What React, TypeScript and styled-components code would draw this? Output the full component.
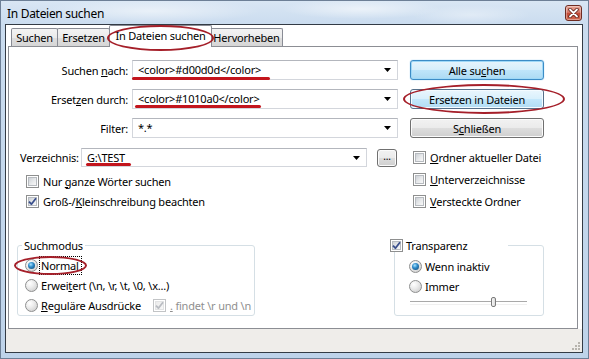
import React from "react";
import styled, { createGlobalStyle, css } from "styled-components";

const GlobalStyle = createGlobalStyle`
  html, body { margin: 0; padding: 0; }
  body {
    font-family: "Noto Sans", "Open Sans", sans-serif;
    font-size: 11px;
    letter-spacing: -0.2px;
    color: #000;
    background: #c4d7ed;
  }
  * { box-sizing: border-box; }
`;

const Window = styled.div`
  width: 589px;
  height: 359px;
  border: 1px solid #6d7f96;
  padding: 0 5px 5px 4px;
  display: flex;
  flex-direction: column;
  background:
    radial-gradient(ellipse 110px 12px at 150px 10px, rgba(255, 255, 255, 0.5), transparent),
    radial-gradient(ellipse 80px 10px at 360px 8px, rgba(255, 255, 255, 0.55), transparent),
    radial-gradient(ellipse 60px 10px at 470px 14px, rgba(255, 255, 255, 0.35), transparent),
    linear-gradient(180deg, #d9e6f4 0px, #cadcef 24px, #bed3ea 100%);
`;

const TitleBar = styled.div`
  height: 23px;
  flex: none;
  display: flex;
  align-items: flex-start;
  justify-content: space-between;
  padding-left: 2px;
`;

const Title = styled.span`
  font-size: 12px;
  letter-spacing: -0.3px;
  line-height: 23px;
  margin-top: 1px;
`;

const CloseBtn = styled.div`
  width: 17px;
  height: 16px;
  margin-top: 4px;
  margin-right: 1px;
  border: 1px solid #6e2c22;
  border-radius: 3px;
  background: linear-gradient(180deg, #e9a898 0%, #d6796a 45%, #c34a36 52%, #d06a52 100%);
  box-shadow: inset 0 0 0 1px rgba(255, 255, 255, 0.35);
  display: flex;
  align-items: center;
  justify-content: center;
`;

const Client = styled.div`
  flex: 1;
  border: 1px solid #333b45;
  background: #fff;
  display: flex;
  flex-direction: column;
`;

const TabStrip = styled.div`
  height: 21px;
  flex: none;
  display: flex;
  align-items: flex-end;
  padding-left: 4px;
  position: relative;
  z-index: 2;
`;

const Tab = styled.div<{ $w: number; $active?: boolean }>`
  width: ${(p) => p.$w}px;
  height: 18px;
  margin-left: -1px;
  border: 1px solid #898c95;
  border-bottom: none;
  border-radius: 2px 2px 0 0;
  background: linear-gradient(180deg, #f3f3f3 0%, #ebebeb 50%, #dedede 51%, #d6d6d6 100%);
  display: flex;
  align-items: center;
  justify-content: center;
  white-space: nowrap;
  position: relative;
  &:first-child { margin-left: 1px; }
  ${(p) =>
    p.$active &&
    css`
      height: 22px;
      margin-bottom: -1px;
      margin-right: -1px;
      background: #fff;
      z-index: 2;
      padding-bottom: 3px;
    `}
`;

const Ellipse = styled.span<{ $x: number; $y: number; $w: number; $h: number }>`
  position: absolute;
  left: ${(p) => p.$x}px;
  top: ${(p) => p.$y}px;
  width: ${(p) => p.$w}px;
  height: ${(p) => p.$h}px;
  border: 2px solid #a51f29;
  border-radius: 50%;
  pointer-events: none;
  z-index: 3;
`;

const Panel = styled.div`
  margin: 0 4px 0 2px;
  height: 283px;
  flex: none;
  border: 1px solid #8c8e94;
  background: #fff;
  padding: 13px 0 12px 8px;
  display: flex;
  flex-direction: column;
`;

const TopSection = styled.div`
  display: flex;
  gap: 12px;
`;

const LeftCol = styled.div`
  width: 381px;
  display: flex;
  flex-direction: column;
`;

const RightCol = styled.div`
  width: 134px;
  display: flex;
  flex-direction: column;
`;

const FieldRow = styled.div`
  display: grid;
  grid-template-columns: 111px 266px;
  column-gap: 4px;
  height: 20px;
  margin-bottom: 9px;
  align-items: center;
`;

const FieldLabel = styled.span`
  text-align: right;
  white-space: nowrap;
`;

const DirRow = styled.div`
  display: flex;
  align-items: center;
  height: 19px;
  margin-top: 1px;
  padding-left: 3px;
`;

const DirLabel = styled.span`
  width: 61px;
  flex: none;
  white-space: nowrap;
`;

const Combo = styled.div<{ $w?: number }>`
  width: ${(p) => (p.$w ? `${p.$w}px` : "100%")};
  height: 100%;
  flex: none;
  border: 1px solid #d3d6dc;
  border-top-color: #b3b6bd;
  background: #fff;
  display: flex;
  align-items: center;
  padding: 0 6px 0 5px;
  white-space: nowrap;
`;

const ComboText = styled.span`
  position: relative;
  display: inline-block;
  line-height: 14px;
`;

const Stroke = styled.span<{ $l: number; $r: number; $b: number }>`
  position: absolute;
  left: ${(p) => p.$l}px;
  right: ${(p) => p.$r}px;
  bottom: ${(p) => p.$b}px;
  height: 3px;
  border-radius: 2px;
  background: #c3151d;
`;

const Arrow = styled.svg`
  margin-left: auto;
  flex: none;
`;

const Mn = styled.span`
  text-decoration: underline;
  text-underline-offset: 1px;
`;

const CheckList = styled.div<{ $pad: number; $top: number }>`
  display: flex;
  flex-direction: column;
  padding-left: ${(p) => p.$pad}px;
  margin-top: ${(p) => p.$top}px;
`;

const CheckRow = styled.div<{ $h: number }>`
  display: flex;
  align-items: center;
  gap: 4px;
  height: ${(p) => p.$h}px;
  white-space: nowrap;
  position: relative;
`;

const Box = styled.span<{ $disabled?: boolean }>`
  width: 13px;
  height: 13px;
  flex: none;
  border: 1px solid ${(p) => (p.$disabled ? "#c2c4c6" : "#8e8f8f")};
  background: #fff;
  position: relative;
  display: inline-flex;
  align-items: center;
  justify-content: center;
  &::before {
    content: "";
    position: absolute;
    inset: 1px;
    border: 1px solid ${(p) => (p.$disabled ? "#e2e3e4" : "#b7bbc0")};
    background: ${(p) =>
      p.$disabled
        ? "linear-gradient(135deg, #ececec 0%, #f7f7f7 100%)"
        : "linear-gradient(135deg, #cdd1d6 0%, #e6e8ea 50%, #f8f8f8 100%)"};
  }
  svg { position: relative; z-index: 1; }
`;

const Radio = styled.span<{ $on?: boolean }>`
  width: 13px;
  height: 13px;
  flex: none;
  border-radius: 50%;
  border: 1px solid #8e8f8f;
  background: radial-gradient(circle at 35% 30%, #ffffff 0%, #ececec 40%, #c6c6c6 100%);
  display: inline-flex;
  align-items: center;
  justify-content: center;
  &::after {
    content: "";
    display: ${(p) => (p.$on ? "block" : "none")};
    width: 7px;
    height: 7px;
    border-radius: 50%;
    background: radial-gradient(circle at 40% 35%, #a9e4ff 0%, #2f8ccb 40%, #0d3f66 100%);
  }
`;

const Focus = styled.span`
  outline: 1px dotted #000;
  outline-offset: 1px;
  padding: 0 1px 0 0;
`;

const Disabled = styled.span`
  color: #8f8f8f;
`;

const ButtonStack = styled.div`
  display: flex;
  flex-direction: column;
  gap: 9px;
`;

const Button = styled.button<{ $variant?: "default" | "hot" | "normal"; $w?: number; $h?: number }>`
  width: ${(p) => (p.$w ? `${p.$w}px` : "100%")};
  height: ${(p) => p.$h ?? 20}px;
  flex: none;
  padding: 0;
  font: inherit;
  letter-spacing: inherit;
  color: #000;
  border-radius: 3px;
  position: relative;
  border: 1px solid #707070;
  background: linear-gradient(180deg, #f2f2f2 0%, #ebebeb 48%, #dddddd 52%, #cfcfcf 100%);
  box-shadow: inset 0 0 0 1px #fbfbfb;
  line-height: 1;
  ${(p) =>
    p.$variant === "default" &&
    css`
      border-color: #3c8cc6;
      background: linear-gradient(180deg, #e6f4fc 0%, #d6eefb 48%, #bfe5fa 52%, #acdaf3 100%);
      box-shadow: inset 0 0 0 1px #9fd8f7, 0 0 1px #54aee6;
    `}
  ${(p) =>
    p.$variant === "hot" &&
    css`
      border-color: #56708a;
      background: linear-gradient(180deg, #eaf6fd 0%, #d9f0fc 48%, #c3e7fb 52%, #b1dcf4 100%);
      box-shadow: inset 0 0 0 1px #f4fbff;
    `}
`;

const DotsButton = styled(Button)`
  margin-left: 10px;
  font-size: 10px;
  padding-bottom: 3px;
`;

const GroupsRow = styled.div`
  margin-top: auto;
  display: flex;
  height: 71px;
`;

const GroupBox = styled.div<{ $w: number; $ml?: number; $pt: number; $pl: number }>`
  width: ${(p) => p.$w}px;
  margin-left: ${(p) => p.$ml ?? 0}px;
  height: 71px;
  border: 1px solid #d5dfe5;
  border-radius: 3px;
  position: relative;
  padding: ${(p) => p.$pt}px 0 0 ${(p) => p.$pl}px;
  display: flex;
  flex-direction: column;
`;

const Legend = styled.div<{ $x: number; $w?: number }>`
  position: absolute;
  top: -8px;
  left: ${(p) => p.$x}px;
  ${(p) => p.$w && `width: ${p.$w}px;`}
  height: 14px;
  padding: 0 2px;
  background: #fff;
  display: flex;
  align-items: center;
  gap: 3px;
  white-space: nowrap;
`;

const RadioRow = styled.div<{ $gap?: number }>`
  display: flex;
  align-items: center;
  gap: ${(p) => p.$gap ?? 3}px;
  height: 20px;
  white-space: nowrap;
  position: relative;
`;

const InlineCheck = styled.span`
  display: inline-flex;
  align-items: center;
  gap: 4px;
  margin-left: 9px;
`;

const Slider = styled.div`
  width: 117px;
  height: 12px;
  margin-left: 1px;
  position: relative;
  &::before {
    content: "";
    position: absolute;
    left: 0;
    right: 0;
    top: 5px;
    height: 2px;
    border-top: 1px solid #a9a9a9;
    border-bottom: 1px solid #f0f0f0;
  }
`;

const Thumb = styled.span`
  position: absolute;
  top: 1px;
  width: 5px;
  height: 10px;
  margin-left: -2px;
  border: 1px solid #7a7a7a;
  border-radius: 2px;
  background: linear-gradient(90deg, #f6f6f6, #dcdcdc);
`;

const Footer = styled.div`
  flex: 1;
  background: #efedea;
  display: flex;
  justify-content: flex-end;
  align-items: flex-end;
  padding: 0 2px 2px 0;
`;

const ComboArrow = () => (
  <Arrow width="7" height="4" viewBox="0 0 7 4">
    <path d="M0 0 H7 L3.5 4 Z" fill="#000" />
  </Arrow>
);

const Check = ({ disabled }: { disabled?: boolean }) => (
  <svg width="9" height="9" viewBox="0 0 9 9">
    <path
      d="M1 4.6 L3.4 7.2 L8 1.2"
      fill="none"
      stroke={disabled ? "#b9bcc2" : "#3a4f8c"}
      strokeWidth="1.8"
      strokeLinejoin="round"
    />
  </svg>
);

const CheckBox = ({ checked, disabled }: { checked?: boolean; disabled?: boolean }) => (
  <Box $disabled={disabled}>{checked && <Check disabled={disabled} />}</Box>
);

const CloseGlyph = () => (
  <svg width="11" height="10" viewBox="0 0 11 10">
    <path d="M2 1.5 L9 8.5 M9 1.5 L2 8.5" stroke="#5b1c14" strokeWidth="3.4" strokeLinecap="round" />
    <path d="M2 1.5 L9 8.5 M9 1.5 L2 8.5" stroke="#ffffff" strokeWidth="1.8" strokeLinecap="round" />
  </svg>
);

const Gripper = () => (
  <svg width="9" height="9" viewBox="0 0 9 9">
    {[
      [7, 1],
      [7, 4],
      [4, 4],
      [7, 7],
      [4, 7],
      [1, 7],
    ].map(([x, y]) => (
      <rect key={`${x}-${y}`} x={x} y={y} width="2" height="2" fill="#b7b4ae" />
    ))}
  </svg>
);

const tabs = [
  { label: "Suchen", w: 47 },
  { label: "Ersetzen", w: 53 },
  { label: "In Dateien suchen", w: 103, active: true },
  { label: "Hervorheben", w: 73 },
];

const transparency = 71;

export default function App() {
  return (
    <>
      <GlobalStyle />
      <Window>
        <TitleBar>
          <Title>In Dateien suchen</Title>
          <CloseBtn>
            <CloseGlyph />
          </CloseBtn>
        </TitleBar>
        <Client>
          <TabStrip>
            {tabs.map((t) => (
              <Tab key={t.label} $w={t.w} $active={t.active}>
                {t.label}
                {t.active && <Ellipse $x={-3} $y={-1} $w={107} $h={26} />}
              </Tab>
            ))}
          </TabStrip>
          <Panel>
            <TopSection>
              <LeftCol>
                <FieldRow>
                  <FieldLabel>
                    Suchen <Mn>n</Mn>ach:
                  </FieldLabel>
                  <Combo>
                    <ComboText>
                      {"<color>#d00d0d</color>"}
                      <Stroke $l={-6} $r={-9} $b={-3} />
                    </ComboText>
                    <ComboArrow />
                  </Combo>
                </FieldRow>
                <FieldRow>
                  <FieldLabel>
                    Erset<Mn>z</Mn>en durch:
                  </FieldLabel>
                  <Combo>
                    <ComboText>
                      {"<color>#1010a0</color>"}
                      <Stroke $l={-3} $r={-1} $b={-2} />
                    </ComboText>
                    <ComboArrow />
                  </Combo>
                </FieldRow>
                <FieldRow>
                  <FieldLabel>Filter:</FieldLabel>
                  <Combo>
                    <ComboText>*.*</ComboText>
                    <ComboArrow />
                  </Combo>
                </FieldRow>
                <DirRow>
                  <DirLabel>Verzeichnis:</DirLabel>
                  <Combo $w={286}>
                    <ComboText>
                      {"G:\\TEST"}
                      <Stroke $l={-1} $r={-6} $b={-1} />
                    </ComboText>
                    <ComboArrow />
                  </Combo>
                  <DotsButton $variant="normal" $w={20} $h={18}>
                    ...
                  </DotsButton>
                </DirRow>
                <CheckList $pad={9} $top={4}>
                  <CheckRow $h={20}>
                    <CheckBox />
                    <span>
                      Nur <Mn>g</Mn>anze Wörter suchen
                    </span>
                  </CheckRow>
                  <CheckRow $h={20}>
                    <CheckBox checked />
                    <span>
                      Groß-/<Mn>K</Mn>leinschreibung beachten
                    </span>
                  </CheckRow>
                </CheckList>
              </LeftCol>
              <RightCol>
                <ButtonStack>
                  <Button $variant="default">
                    Alle su<Mn>c</Mn>hen
                  </Button>
                  <Button $variant="hot">
                    Ersetzen in Dateien
                    <Ellipse $x={-8} $y={-6} $w={162} $h={30} />
                  </Button>
                  <Button $variant="normal">
                    S<Mn>c</Mn>hließen
                  </Button>
                </ButtonStack>
                <CheckList $pad={3} $top={8}>
                  <CheckRow $h={22}>
                    <CheckBox />
                    <span>
                      <Mn>O</Mn>rdner aktueller Datei
                    </span>
                  </CheckRow>
                  <CheckRow $h={22}>
                    <CheckBox />
                    <span>
                      <Mn>U</Mn>nterverzeichnisse
                    </span>
                  </CheckRow>
                  <CheckRow $h={22}>
                    <CheckBox />
                    <span>
                      <Mn>V</Mn>ersteckte Ordner
                    </span>
                  </CheckRow>
                </CheckList>
              </RightCol>
            </TopSection>
            <GroupsRow>
              <GroupBox $w={238} $pt={9} $pl={7}>
                <Legend $x={4}>Suchmodus</Legend>
                <RadioRow>
                  <Radio $on />
                  <Focus>Normal</Focus>
                  <Ellipse $x={-11} $y={1} $w={73} $h={19} />
                </RadioRow>
                <RadioRow>
                  <Radio />
                  <span>
                    Erwei<Mn>t</Mn>ert {"(\\n, \\r, \\t, \\0, \\x...)"}
                  </span>
                </RadioRow>
                <RadioRow>
                  <Radio />
                  <span>
                    <Mn>R</Mn>eguläre Ausdrücke
                  </span>
                  <InlineCheck>
                    <CheckBox checked disabled />
                    <Disabled>
                      <Mn>.</Mn> findet {"\\r"} und {"\\n"}
                    </Disabled>
                  </InlineCheck>
                </RadioRow>
              </GroupBox>
              <GroupBox $w={150} $ml={139} $pt={10} $pl={14}>
                <Legend $x={-7} $w={120}>
                  <CheckBox checked />
                  <span>Transparenz</span>
                </Legend>
                <RadioRow>
                  <Radio $on />
                  <span>Wenn inaktiv</span>
                </RadioRow>
                <RadioRow>
                  <Radio />
                  <span>Immer</span>
                </RadioRow>
                <Slider>
                  <Thumb style={{ left: `${transparency}%` }} />
                </Slider>
              </GroupBox>
            </GroupsRow>
          </Panel>
          <Footer>
            <Gripper />
          </Footer>
        </Client>
      </Window>
    </>
  );
}
